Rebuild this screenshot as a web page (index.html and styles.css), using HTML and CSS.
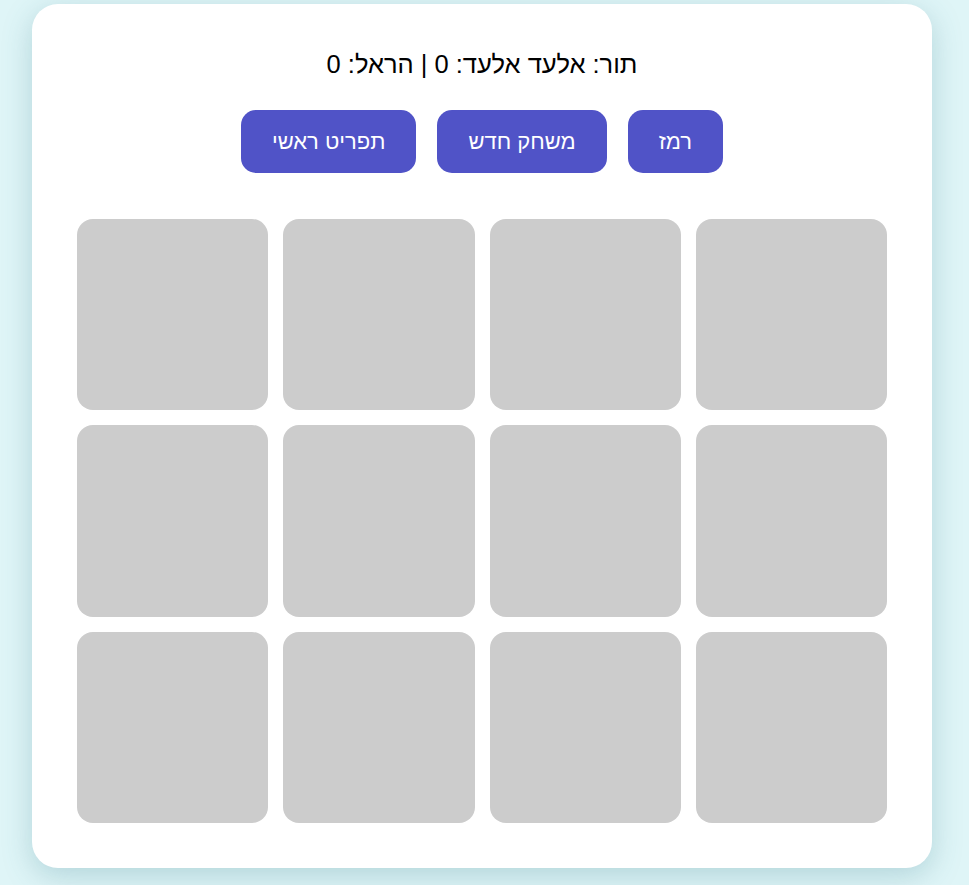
FILE: index.html
```html
<!DOCTYPE html>
<html lang="he" dir="rtl">
<head>
<meta charset="utf-8">
<link rel="stylesheet" href="styles.css">
</head>
<body>
<div class="page">
  <main class="card">
    <div class="status">תור: אלעד אלעד: 0 | הראל: 0</div>
    <div class="controls">
      <button class="btn">רמז</button>
      <button class="btn">משחק חדש</button>
      <button class="btn">תפריט ראשי</button>
    </div>
    <div class="board">
      <div class="tile"></div><div class="tile"></div><div class="tile"></div><div class="tile"></div>
      <div class="tile"></div><div class="tile"></div><div class="tile"></div><div class="tile"></div>
      <div class="tile"></div><div class="tile"></div><div class="tile"></div><div class="tile"></div>
    </div>
  </main>
</div>
</body>
</html>
```
FILE: styles.css
```css
html, body {
  margin: 0;
  padding: 0;
  height: 100%;
  overflow: hidden;
}
body {
  background: #dff5f7;
  font-family: "Liberation Sans", Arial, sans-serif;
}
.page {
  display: flex;
  justify-content: flex-start;
  padding: 4px 0 0 32px;
  direction: ltr;
}
.card {
  direction: rtl;
  width: 900px;
  box-sizing: border-box;
  padding: 45px;
  background: #ffffff;
  border-radius: 26px;
  box-shadow: 0 8px 30px rgba(60, 130, 145, 0.28);
}
.status {
  text-align: center;
  font-size: 25.5px;
  line-height: 30px;
  color: #000;
}
.controls {
  display: flex;
  justify-content: center;
  gap: 21px;
  margin-top: 31px;
}
.btn {
  font-family: "Liberation Sans", Arial, sans-serif;
  font-size: 22px;
  line-height: 25px;
  padding: 19px 31px;
  border: none;
  border-radius: 15px;
  background: #5053c7;
  color: #fff;
}
.board {
  display: grid;
  grid-template-columns: repeat(4, 1fr);
  gap: 15px;
  margin-top: 46px;
}
.tile {
  aspect-ratio: 1 / 1;
  background: #cccccc;
  border-radius: 16px;
}
```
